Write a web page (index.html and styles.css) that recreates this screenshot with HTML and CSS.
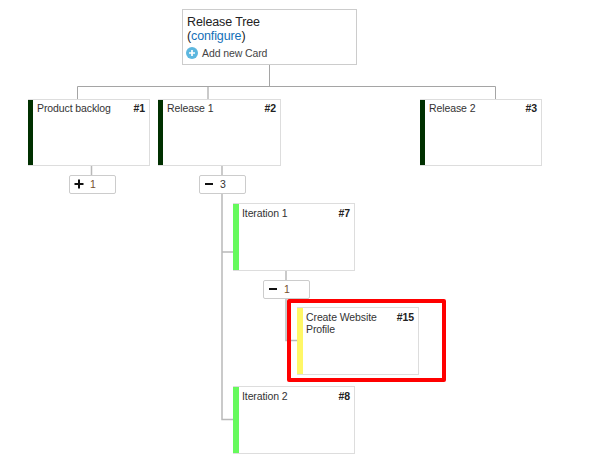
FILE: index.html
```html
<!DOCTYPE html>
<html lang="en">
<head>
<meta charset="utf-8">
<title>Release Tree</title>
<link rel="stylesheet" href="styles.css">
</head>
<body>
<main class="tree">
  <svg class="connectors" width="591" height="471" fill="none" aria-hidden="true">
    <path class="trunk" d="M269.500 65V86.500M77.500 99V86.500H495.500V99"/>
    <path class="branch" d="M208 87V99M91.500 166V175M222 166V176M222 194V419.500H233M222 252H233M286 271V280M286 298V340.500H297"/>
  </svg>

  <section class="root">
    <h1 class="root-title">Release Tree</h1>
    <div class="root-config">(<a class="link">configure</a>)</div>
    <div class="add">
      <svg class="add-icon" viewBox="0 0 12 12"><circle cx="6" cy="6" r="6" fill="#5db7df"/><path d="M6 3v6M3 6h6" stroke="#fff" stroke-width="1.700"/></svg>
      <span class="add-label">Add new Card</span>
    </div>
  </section>

  <article class="card release backlog"><span class="name">Product backlog</span><b class="number">#1</b></article>
  <article class="card release release-1"><span class="name">Release 1</span><b class="number">#2</b></article>
  <article class="card release release-2"><span class="name">Release 2</span><b class="number">#3</b></article>
  <article class="card iteration iteration-1"><span class="name">Iteration 1</span><b class="number">#7</b></article>
  <article class="card iteration iteration-2"><span class="name">Iteration 2</span><b class="number">#8</b></article>

  <div class="toggle toggle-backlog"><svg class="sign" viewBox="0 0 10 10"><path d="M.5 5h9M5 .5v9"/></svg><span class="count warm">1</span></div>
  <div class="toggle toggle-release"><svg class="sign" viewBox="0 0 10 10"><path d="M1 5h8"/></svg><span class="count">3</span></div>
  <div class="toggle toggle-iteration"><svg class="sign" viewBox="0 0 10 10"><path d="M1 5h8"/></svg><span class="count warm">1</span></div>

  <div class="highlight"></div>
  <article class="card story story-15"><span class="name">Create Website Profile</span><b class="number">#15</b></article>
</main>
</body>
</html>
```

FILE: styles.css
```css
* { box-sizing: border-box; }
body {
  margin: 0;
  background: #fff;
  color: #333;
  font-family: "Liberation Sans", Arial, sans-serif;
}
.tree { position: relative; width: 591px; height: 471px; overflow: hidden; }
.connectors { position: absolute; inset: 0; }
.trunk { stroke: #a5a5a5; }
.branch { stroke: #b9b9b9; stroke-width: 1.5; }

.root {
  position: absolute;
  left: 182px;
  top: 9px;
  width: 175px;
  height: 56px;
  padding: 5px 4px 0;
  border: 1px solid #ccc;
  background: #fff;
  font-size: 12.5px;
  letter-spacing: -0.12px;
  line-height: 14px;
  color: #222;
}
.root-title { margin: 0; font-size: inherit; font-weight: normal; }
.link { color: #1470b8; }
.add { display: flex; align-items: center; gap: 4px; margin-top: 4px; margin-left: -1px; height: 12px; }
.add-icon { width: 12px; height: 12px; }
.add-label { font-size: 10.5px; letter-spacing: -0.1px; line-height: 12px; color: #444; }

.card {
  position: absolute;
  display: flex;
  justify-content: space-between;
  align-items: flex-start;
  width: 122px;
  height: 67px;
  padding: 3px 4px 0 8px;
  border: 1px solid #ddd;
  border-left: 0;
  background: linear-gradient(to right, var(--stripe) 5px, #fff 5px) border-box;
  font-size: 10.5px;
  letter-spacing: -0.1px;
  line-height: 12px;
}
.name { padding-left: 1px; }
.number { color: #222; }
.release { --stripe: #003000; padding-top: 2px; }
.iteration { --stripe: #66fa5c; }
.story { --stripe: #fff766; }
.backlog { left: 28px; top: 99px; }
.release-1 { left: 158px; top: 99px; width: 123px; }
.release-2 { left: 420px; top: 99px; }
.iteration-1 { left: 233px; top: 203px; height: 68px; }
.iteration-2 { left: 233px; top: 386px; height: 68px; }
.story-15 { left: 297px; top: 307px; height: 68px; }
.story .name { width: 77px; }
.iteration, .story { background-size: 100% 100%; }
.iteration { background-image: linear-gradient(to right, var(--stripe) 6px, #fff 6px); }
.story { background-image: linear-gradient(to right, var(--stripe) 6px, #fff 6px); }

.toggle {
  position: absolute;
  display: flex;
  align-items: center;
  gap: 6px;
  width: 47px;
  height: 19px;
  padding-left: 4px;
  padding-bottom: 1px;
  border: 1px solid #ccc;
  border-radius: 2px;
  background: #fff;
  font-size: 10.5px;
  line-height: 12px;
}
.sign { width: 10px; height: 10px; stroke: #111; stroke-width: 2; }
.warm { color: #75502e; }
.toggle-backlog { left: 69px; top: 175px; }
.toggle-release { left: 199px; top: 175px; }
.toggle-iteration { left: 263px; top: 280px; }

.highlight {
  position: absolute;
  left: 287px;
  top: 299px;
  width: 159px;
  height: 83px;
  border: 4px solid #f00;
  border-radius: 2px;
}
```
